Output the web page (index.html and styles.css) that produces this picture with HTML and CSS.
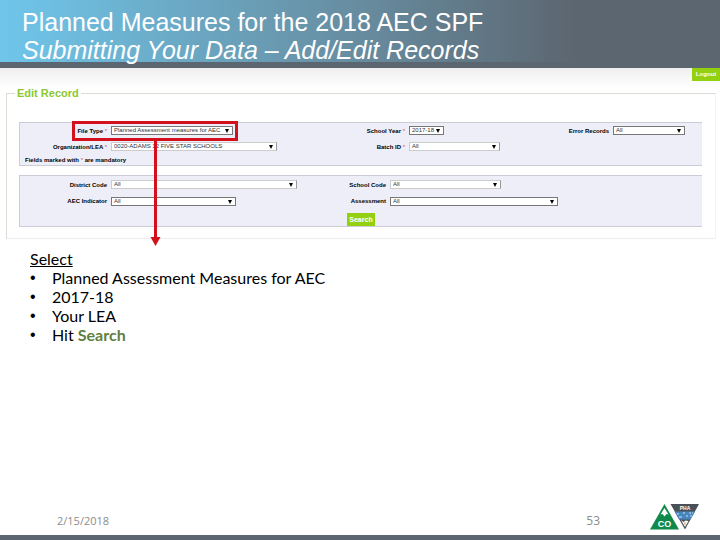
FILE: index.html
```html
<!DOCTYPE html>
<html lang="en">
<head>
    <meta charset="UTF-8">
    <meta name="viewport" content="width=device-width, initial-scale=1.0">
    <title>Planned Measures for the 2018 AEC SPF</title>
    <link rel="stylesheet" href="styles.css">
</head>
<body>

<header class="slide-header">
    <h1 class="title">Planned Measures for the 2018 AEC SPF<br><em>Submitting Your Data – Add/Edit Records</em></h1>
</header>

<main class="content">
    <form class="edit-form">
        <div class="toolbar"><button type="button" class="logout">Logout</button></div>
        <fieldset class="record">
            <legend>Edit Record</legend>

            <div class="panel panel-top">
                <label for="file-type">File Type <i>*</i></label>
                <span class="select w-file"><select id="file-type"><option>Planned Assessment measures for AEC</option></select></span>
                <label for="school-year">School Year <i>*</i></label>
                <span class="select w-year"><select id="school-year"><option>2017-18</option></select></span>
                <label for="error-records">Error Records</label>
                <span class="select w-error"><select id="error-records"><option>All</option></select></span>

                <label for="organization">Organization/LEA <i>*</i></label>
                <span class="select soft w-org"><select id="organization"><option>0020-ADAMS 12 FIVE STAR SCHOOLS</option></select></span>
                <label for="batch">Batch ID <i>*</i></label>
                <span class="select soft w-batch"><select id="batch"><option>All</option></select></span>

                <p class="note">Fields marked with <i>*</i> are mandatory</p>
            </div>

            <div class="panel panel-bottom">
                <label for="district">District Code</label>
                <span class="select soft w-district"><select id="district"><option>All</option></select></span>
                <label for="school-code">School Code</label>
                <span class="select soft w-school"><select id="school-code"><option>All</option></select></span>

                <label for="indicator">AEC Indicator</label>
                <span class="select w-indicator"><select id="indicator"><option>All</option></select></span>
                <label for="assessment">Assessment</label>
                <span class="select w-assessment"><select id="assessment"><option>All</option></select></span>

                <button type="button" class="search">Search</button>
            </div>
        </fieldset>

        <!-- callout over the File Type field -->
        <div class="callout-box"></div>
        <svg class="callout-arrow" width="11" height="106" viewBox="0 0 11 106" aria-hidden="true">
            <path d="M4 0h3v97h3.500L5.500 106 .5 97H4z" fill="#d4101c"/>
        </svg>
    </form>

    <section class="steps">
        <p class="steps-title"><u>Select</u></p>
        <ul>
            <li>Planned Assessment Measures for AEC</li>
            <li>2017-18</li>
            <li>Your LEA</li>
            <li>Hit <strong>Search</strong></li>
        </ul>
    </section>
</main>

<footer class="slide-footer">
    <span class="date">2/15/2018</span>
    <span class="page">53</span>
    <svg class="logo" width="50" height="26" viewBox="0 0 50 26" role="img" aria-label="Colorado">
        <path d="M14.500 0L29 25.500H0z" fill="#10894a"/>
        <path d="M14.500 4l4 6.500-2-.5-2 2.500-2-2.500-2 .5z" fill="#fff"/>
        <text x="14.500" y="22.500" text-anchor="middle" font-size="9" fill="#fff" class="logo-text">CO</text>
        <path d="M20.500 0H49L35 25.500z" fill="#4a5058"/>
        <path d="M24.500 7.500H45L40.500 15.500H29z" fill="#4686bd"/>
        <path d="M27 10h2M33 9h2M39 9h2M29 13h3M36 12h2M40 12h2M42 9h1" stroke="#cfe2ef" stroke-width="1.200"/>
        <path d="M31 16l2.500 2 2-1.500 3 .5-3.500 6z" fill="#fff"/>
        <path d="M34 18.500h2l-1 3z" fill="#c9a13b"/>
        <text x="35" y="5.500" text-anchor="middle" font-size="5" fill="#fff" class="logo-text">PHA</text>
    </svg>
</footer>

</body>
</html>
```
FILE: styles.css
```css
* {
    box-sizing: border-box;
}
body {
    display: flex;
    flex-direction: column;
    min-height: 100vh;
    margin: 0;
    background-color: #fff;
    color: #000;
    font-family: "Liberation Sans", Arial, sans-serif;
}

/* header */
.slide-header {
    padding: 8px 22px 0;
    background: linear-gradient(to right, #6fc6eb 0%, #678c9f 50%, #5c6670 80%);
    border-bottom: 6px solid #5c6670;
}
.title {
    margin: 0;
    height: 54px;
    font-size: 25px;
    font-weight: normal;
    line-height: 28px;
    color: #fff;
}

/* form */
.content {
    flex: 1;
}
.edit-form {
    position: relative;
    background: linear-gradient(#efefef, #fff 20px);
    font-size: 6px;
}
.toolbar {
    display: flex;
    justify-content: flex-end;
}
.logout,
.search {
    border: none;
    padding: 0;
    width: 28px;
    height: 13px;
    background-color: #92d010;
    color: #fff;
    font: bold 6px/13px "Liberation Sans", Arial, sans-serif;
    cursor: pointer;
}
.record {
    margin: 6px 4px 0 6px;
    padding: 23px 13px 11px 12px;
    border: 1px solid #dcdcd4;
    border-right-color: #f4f4f4;
    border-bottom-color: #ececec;
}
.record legend {
    margin-left: -4px;
    padding: 0 2px;
    color: #8cc832;
    font-size: 11px;
    font-weight: bold;
    line-height: 12px;
}
.panel {
    display: grid;
    column-gap: 4px;
    align-items: center;
    background-color: #eeeef9;
    border: 1px solid #ccccd6;
    border-width: 1px 0 1px 1px;
}
.panel-top {
    grid-template-columns: 87fr 200fr 90fr 100fr 96fr 89fr;
    grid-template-rows: 15px 17px 10px;
}
.panel-bottom {
    grid-template-columns: 87fr 186fr 85fr 312fr;
    grid-template-rows: 17px 16px 17px;
    margin-top: 9px;
}
.panel label {
    font-weight: bold;
    text-align: right;
    white-space: nowrap;
}
.panel i {
    color: #e04848;
    font-style: normal;
    font-weight: normal;
}
.note {
    grid-column: 1 / -1;
    grid-row: 3;
    margin: 0 5px;
    font-weight: bold;
    line-height: 8px;
}
.search {
    grid-column: 1 / -1;
    grid-row: 3;
    align-self: end;
    justify-self: center;
    font-size: 7px;
}

/* drop-downs */
.select {
    position: relative;
    display: block;
    height: 9px;
    background-color: #fff;
    border: 1px solid #777;
}
.select.soft {
    border-color: #ccc #999 #ccc #ccc;
}
.select::after {
    content: "";
    position: absolute;
    top: 2px;
    right: 3px;
    border: 2px solid transparent;
    border-top: 4px solid #000;
    border-bottom: none;
    pointer-events: none;
}
.select select {
    display: block;
    width: 100%;
    height: 7px;
    padding: 0 8px 0 2px;
    border: none;
    background: none;
    color: #333;
    font: 6px/7px "Liberation Sans", Arial, sans-serif;
    appearance: none;
}
.w-file { width: 122px; }
.w-year { width: 35px; }
.w-error { width: 72px; }
.w-org { width: 166px; }
.w-batch { width: 91px; }
.w-district { width: 186px; }
.w-school { width: 111px; }
.w-indicator { width: 125px; }
.w-assessment { width: 168px; }

/* callout */
.callout-box {
    position: absolute;
    top: 53px;
    left: 72px;
    width: 166px;
    height: 20px;
    border: 3px solid #d4101c;
}
.callout-arrow {
    position: absolute;
    top: 72px;
    left: 150px;
}

/* steps */
.steps {
    padding: 10px 30px;
    font-family: Lato, "Open Sans", sans-serif;
    font-size: 16px;
    line-height: 19px;
}
.steps-title {
    margin: 0;
}
.steps ul {
    margin: 0;
    padding: 0;
    list-style: none;
}
.steps li {
    display: flex;
    white-space: pre;
}
.steps li::before {
    content: "•";
    width: 22px;
    font-family: "Liberation Sans", Arial, sans-serif;
}
.steps strong {
    color: #5f8040;
}

/* footer */
.slide-footer {
    display: flex;
    align-items: flex-end;
    padding: 0 20px 5px 57px;
    border-bottom: 5px solid #5c6670;
    color: #8c8c8c;
    font-family: "Open Sans", "Noto Sans", sans-serif;
    font-size: 11px;
    line-height: 18px;
}
.page {
    margin-left: auto;
    margin-right: 50px;
    font-size: 12px;
}
.logo-text {
    font-family: "Liberation Sans", Arial, sans-serif;
    font-weight: bold;
}
```
